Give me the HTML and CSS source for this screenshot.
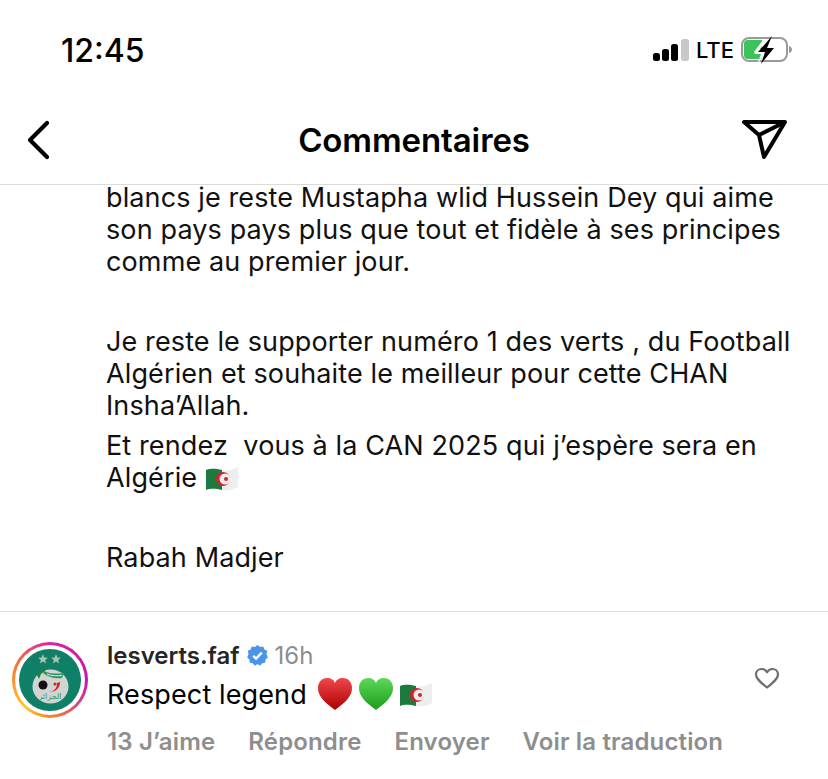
FILE: index.html
```html
<!DOCTYPE html>
<html>
<head>
    <title>Commentaires</title>
    <link rel="stylesheet" href="styles.css">
</head>
<body>
    <div class="screen">
        <div class="status-bar">
            <div class="time">12:45</div>
            <div class="status-icons">
                <svg class="signal" width="38" height="24" viewBox="0 0 38 24">
                    <rect x="0" y="15" width="7" height="8" rx="2.5" fill="#000"/>
                    <rect x="9" y="11" width="7" height="12" rx="2.5" fill="#000"/>
                    <rect x="18" y="6" width="7" height="17" rx="2.5" fill="#000"/>
                    <rect x="28" y="1" width="8" height="22" rx="2.5" fill="#c8c8c8"/>
                </svg>
                <span class="lte">LTE</span>
                <svg class="battery" width="53" height="30" viewBox="0 0 53 30">
                    <rect x="1" y="3" width="45" height="23" rx="7" fill="none" stroke="#9a9a9a" stroke-width="2"/>
                    <path d="M48 11c2 .5 3 2 3 3.500s-1 3-3 3.500z" fill="#9a9a9a"/>
                    <path d="M7 5h14v19H7a4 4 0 0 1-4-4V9a4 4 0 0 1 4-4z" fill="#3cc45c"/>
                    <path d="M22 5h3L19 14h5l2 1-10 15 4-11h-6l-1-2z" fill="#fff"/>
                    <path d="M31 1 17 17h7l-4 12 13-16h-7l5-12z" fill="#000"/>
                </svg>
            </div>
        </div>

        <div class="nav">
            <svg class="back" width="24" height="40" viewBox="0 0 24 40">
                <path d="M21 3 4 20l17 17" fill="none" stroke="#000" stroke-width="4.200" stroke-linecap="round" stroke-linejoin="round"/>
            </svg>
            <h1>Commentaires</h1>
            <svg class="send" width="46" height="40" viewBox="0 0 46 40">
                <path d="M2 2h41L22 37 17 15z" fill="none" stroke="#000" stroke-width="4" stroke-linejoin="round"/>
                <path d="M17 15 43 2" fill="none" stroke="#000" stroke-width="4"/>
            </svg>
        </div>

        <div class="post">
            <p>blancs je reste Mustapha wlid Hussein Dey qui aime son pays pays plus que tout et fidèle à ses principes comme au premier jour.</p>
            <p class="gap">Je reste le supporter numéro 1 des verts , du Football Algérien et souhaite le meilleur pour cette CHAN Insha’Allah.</p>
            <p class="near">Et rendez&nbsp; vous à la CAN 2025 qui j’espère sera en Algérie
                <svg class="flag" width="34" height="26" viewBox="0 0 34 26">
                    <path d="M1 5c6-2 10-1 16 0v20c-6-1-10-2-16 0z" fill="#1c7a3e"/>
                    <path d="M17 5c6 1 10 0 16-3v20c-6 3-10 4-16 3z" fill="#eeeeee"/>
                    <circle cx="18" cy="14" r="7" fill="#d2232c"/>
                    <circle cx="20" cy="14" r="5.500" fill="#eeeeee"/>
                    <circle cx="21" cy="14" r="2" fill="#d2232c"/>
                </svg>
            </p>
            <p class="gap">Rabah Madjer</p>
        </div>

        <div class="comment">
            <div class="avatar">
                <svg width="62" height="62" viewBox="0 0 62 62">
                    <circle cx="31" cy="31" r="31" fill="#0f7f68"/>
                    <path d="m24 5 1.300 3.500 3.700.2-2.900 2.300 1 3.500-3.100-2-3.100 2 1-3.500-2.900-2.300 3.700-.2z" fill="#a9c4ae"/>
                    <path d="m37 5 1.300 3.500 3.700.2-2.900 2.300 1 3.500-3.100-2-3.100 2 1-3.500-2.900-2.300 3.700-.2z" fill="#a9c4ae"/>
                    <ellipse cx="31.500" cy="37.500" rx="18" ry="17" fill="#d2d4d1"/>
                    <path d="M17 24c3-3 7-4 10-3l-5 4-2 5z" fill="#1e7d4a"/>
                    <path d="M25 22c6 3 13 3 20 2l-2 5c-7 1-14-1-19-5z" fill="#2f9463"/>
                    <path d="M28 25c5 2 10 2 15 1.500" fill="none" stroke="#e8eee8" stroke-width="1"/>
                    <circle cx="24" cy="36" r="4.500" fill="#111"/>
                    <path d="M41 33c0 6-4 10-11 10 6-1 8-4 8-9z" fill="#d2232c"/>
                    <circle cx="36" cy="35" r="1.500" fill="#d2232c"/>
                    <text class="crest-text" x="31" y="50" text-anchor="middle">الجزائر</text>
                </svg>
            </div>
            <div class="comment-body">
                <div class="comment-head">
                    <span class="username">lesverts.faf</span>
                    <svg class="badge" width="21" height="21" viewBox="0 0 22 22">
                        <path d="m11 0 2.700 2 3.300-.5 1.200 3.100 3 1.500-.8 3.200L21.800 13l-2.400 2.300-.3 3.300-3.300.4L13.700 21.700 11 20l-2.700 1.700L6 19l-3.100-.4-.3-3.300L.2 13l1.400-3.700L.8 6.100l3-1.500L5 1.500 8.300 2z" fill="#4a95e6"/>
                        <path d="m6.500 11.300 3 3 6-6.300" fill="none" stroke="#fff" stroke-width="2.400"/>
                    </svg>
                    <span class="age">16h</span>
                </div>
                <div class="comment-text">
                    <span>Respect legend</span>
                    <svg class="emoji-heart" width="36" height="34" viewBox="0 0 36 34">
                        <defs>
                            <linearGradient id="red" x1="0" y1="0" x2="0" y2="1">
                                <stop offset="0" stop-color="#f0474b"/>
                                <stop offset="1" stop-color="#ad0000"/>
                            </linearGradient>
                            <linearGradient id="green" x1="0" y1="0" x2="0" y2="1">
                                <stop offset="0" stop-color="#5ed85a"/>
                                <stop offset="1" stop-color="#1b9c1b"/>
                            </linearGradient>
                        </defs>
                        <path d="M18 33C7 25 1 19 1 11 1 5 5 1 10 1c4 0 7 2 8 5 1-3 4-5 8-5 5 0 9 4 9 10 0 8-6 14-17 22z" fill="url(#red)"/>
                    </svg>
                    <svg class="emoji-heart" width="36" height="34" viewBox="0 0 36 34">
                        <path d="M18 33C7 25 1 19 1 11 1 5 5 1 10 1c4 0 7 2 8 5 1-3 4-5 8-5 5 0 9 4 9 10 0 8-6 14-17 22z" fill="url(#green)"/>
                    </svg>
                    <svg class="flag" width="34" height="26" viewBox="0 0 34 26">
                        <path d="M1 5c6-2 10-1 16 0v20c-6-1-10-2-16 0z" fill="#1c7a3e"/>
                        <path d="M17 5c6 1 10 0 16-3v20c-6 3-10 4-16 3z" fill="#eeeeee"/>
                        <circle cx="18" cy="14" r="7" fill="#d2232c"/>
                        <circle cx="20" cy="14" r="5.500" fill="#eeeeee"/>
                        <circle cx="21" cy="14" r="2" fill="#d2232c"/>
                    </svg>
                </div>
                <div class="comment-actions">
                    <span>13 J’aime</span>
                    <span>Répondre</span>
                    <span>Envoyer</span>
                    <span>Voir la traduction</span>
                </div>
            </div>
            <svg class="like" width="26" height="22" viewBox="0 0 26 22">
                <path d="M13 20.500C6 15 2 11.500 2 7.500 2 4 4.500 2 7.500 2c2.500 0 4.500 1.300 5.500 3.300C14 3.300 16 2 18.500 2 21.500 2 24 4 24 7.500c0 4-4 7.500-11 13z" fill="none" stroke="#6e6e6e" stroke-width="2.200" stroke-linejoin="round"/>
            </svg>
        </div>
    </div>
</body>
</html>
```

FILE: styles.css
```css
* {
    box-sizing: border-box;
}
body {
    margin: 0;
    background: #fff;
    color: #000;
    font-family: Inter, "Liberation Sans", sans-serif;
}
.screen {
    width: 828px;
    height: 779px;
    overflow: hidden;
    display: flex;
    flex-direction: column;
}
.status-bar {
    height: 100px;
    flex: none;
    display: flex;
    align-items: center;
    justify-content: space-between;
    padding: 0 34px 0 61px;
}
.time {
    font-size: 32px;
    font-weight: 500;
}
.status-icons {
    display: flex;
    align-items: center;
}
.signal {
    margin-right: 5px;
}
.lte {
    font-size: 22px;
    font-weight: 500;
    margin-right: 7px;
}
.nav {
    height: 85px;
    flex: none;
    display: grid;
    grid-template-columns: 1fr auto 1fr;
    align-items: center;
    padding: 0 40px 4px;
    border-bottom: 1px solid #dbdbdb;
}
.back {
    margin-left: -14px;
}
.nav h1 {
    margin: 0;
    font-size: 33px;
    font-weight: 600;
    letter-spacing: -0.1px;
}
.send {
    justify-self: end;
}
.post {
    padding: 0 28px 37px 106px;
    font-size: 27px;
    letter-spacing: 0.12px;
    line-height: 32px;
    color: #111;
    border-bottom: 1px solid #dbdbdb;
}
.post p {
    margin: 0;
}
.post p:first-child {
    margin-top: -3px;
}
.post .gap {
    margin-top: 48px;
}
.post .near {
    margin-top: 8px;
}
.flag {
    vertical-align: -4px;
}
.comment {
    display: flex;
    align-items: flex-start;
    padding: 29px 48px 0 12px;
}
.avatar {
    width: 76px;
    height: 76px;
    flex: none;
    margin-top: 1px;
    margin-right: 19px;
    border-radius: 50%;
    display: flex;
    align-items: center;
    justify-content: center;
    background: conic-gradient(#d6249f, #c913b9 25%, #f58529 50%, #fdc830 62%, #fd7a2d 80%, #d6249f);
    position: relative;
}
.avatar::before {
    content: "";
    position: absolute;
    inset: 3px;
    border-radius: 50%;
    background: #fff;
}
.avatar svg {
    position: relative;
}
.crest-text {
    font-family: "DejaVu Sans", sans-serif;
    font-size: 8px;
    fill: #2f9463;
}
.comment-body {
    flex: 1;
}
.comment-head {
    display: flex;
    align-items: center;
    height: 28px;
}
.username {
    font-size: 24px;
    font-weight: 600;
    color: #262626;
}
.badge {
    margin-left: 7px;
}
.age {
    margin-left: 7px;
    font-size: 24px;
    color: #8e8e8e;
}
.comment-text {
    display: flex;
    align-items: center;
    gap: 5px;
    height: 36px;
    margin-top: 7px;
    font-size: 27px;
    letter-spacing: 0.12px;
}
.comment-text span {
    margin-right: 5px;
}
.comment-actions {
    display: flex;
    gap: 33px;
    margin-top: 15px;
    font-size: 24px;
    letter-spacing: 0.15px;
    font-weight: 600;
    color: #8e8e8e;
}
.like {
    margin-top: 26px;
}
```
